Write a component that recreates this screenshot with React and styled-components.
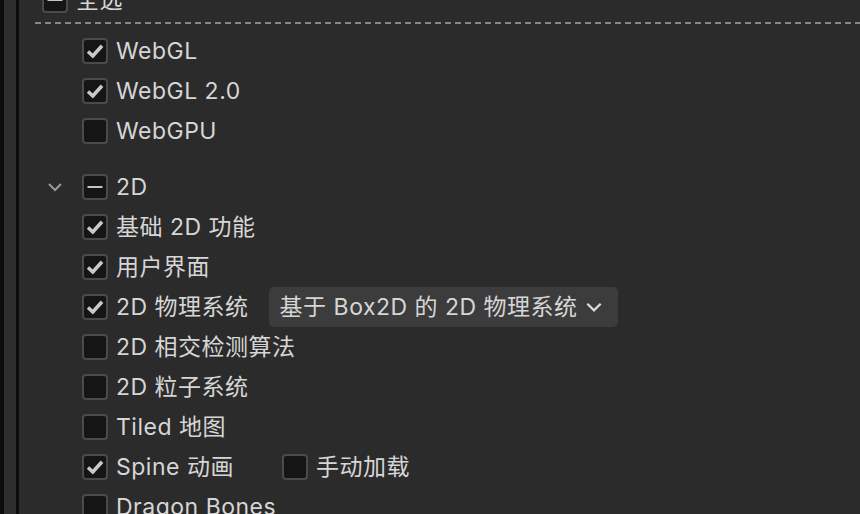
import React from 'react';
import styled, { createGlobalStyle } from 'styled-components';

const GlobalStyle = createGlobalStyle`
  html, body {
    margin: 0;
    padding: 0;
    background: #2b2b2b;
    overflow: hidden;
  }
  body {
    font-family: Inter, "Noto Sans CJK SC", sans-serif;
  }
`;

const Page = styled.div`
  display: flex;
  height: 514px;
  overflow: hidden;
`;

const Rail = styled.div`
  flex: none;
  width: 12px;
  border-left: 4px solid #0c0c0c;
  border-right: 3px solid #0c0c0c;
  background: #2d2d2d;
`;

const Main = styled.div`
  flex: 1;
  display: flex;
  flex-direction: column;
  margin-top: -20px;
`;

const Row = styled.div`
  display: flex;
  align-items: center;
  height: 40px;
  flex: none;
  padding-left: ${p => p.$indent}px;
  color: #d6d6d6;
  font-size: 23px;
  letter-spacing: 0.5px;
  white-space: nowrap;
`;

const Dashed = styled.div`
  flex: none;
  height: 2px;
  margin: 2px 0 7px 16px;
  background: repeating-linear-gradient(to right, #868686 0 6px, transparent 6px 10px);
`;

const Spacer = styled.div`
  flex: none;
  height: 16px;
`;

const Box = styled.span`
  flex: none;
  width: 22px;
  height: 22px;
  border: 2px solid #4b4b4b;
  border-radius: 4px;
  background: #151515;
  display: flex;
  align-items: center;
  justify-content: center;
  margin-right: 8px;
  margin-left: ${p => p.$gap || 0}px;
`;

const Label = styled.span`
  line-height: 1;
`;

const Toggle = styled.span`
  flex: none;
  width: 20px;
  display: flex;
  justify-content: center;
  margin-right: 17px;
`;

const Select = styled.div`
  display: flex;
  align-items: center;
  gap: 6px;
  height: 40px;
  margin-left: 20px;
  padding: 0 14px 0 11px;
  box-sizing: border-box;
  background: #3c3c3c;
  border-radius: 5px;
  color: #d6d6d6;
`;

const Check = () => (
  <svg width="20" height="20" viewBox="0 0 20 20">
    <path d="M3 10.5 L7.8 15 L17 4.8" fill="none" stroke="#c9c9c9" strokeWidth="3.6" strokeLinejoin="miter" />
  </svg>
);

const Dash = () => (
  <svg width="18" height="18" viewBox="0 0 18 18">
    <rect x="1.5" y="8" width="15" height="2" fill="#c4c4c4" />
  </svg>
);

const Chevron = ({ size = 18, color = '#9a9a9a' }) => (
  <svg width={size} height={size} viewBox="0 0 18 18">
    <path d="M3 6 L9 12 L15 6" fill="none" stroke={color} strokeWidth="2" />
  </svg>
);

const Checkbox = ({ state, gap }) => (
  <Box $gap={gap}>
    {state === 'on' && <Check />}
    {state === 'mixed' && <Dash />}
  </Box>
);

const items = [
  { label: '基础 2D 功能', state: 'on' },
  { label: '用户界面', state: 'on' },
  { label: '2D 物理系统', state: 'on', select: '基于 Box2D 的 2D 物理系统' },
  { label: '2D 相交检测算法' },
  { label: '2D 粒子系统' },
  { label: 'Tiled 地图' },
  { label: 'Spine 动画', state: 'on', extra: '手动加载' },
  { label: 'Dragon Bones' },
];

export default function App() {
  return (
    <Page>
      <GlobalStyle />
      <Rail />
      <Main>
        <Row $indent={23}>
          <Checkbox state="mixed" />
          <Label>全选</Label>
        </Row>
        <Dashed />
        <Row $indent={63}>
          <Checkbox state="on" />
          <Label>WebGL</Label>
        </Row>
        <Row $indent={63}>
          <Checkbox state="on" />
          <Label>WebGL 2.0</Label>
        </Row>
        <Row $indent={63}>
          <Checkbox />
          <Label>WebGPU</Label>
        </Row>
        <Spacer />
        <Row $indent={26}>
          <Toggle>
            <Chevron />
          </Toggle>
          <Checkbox state="mixed" />
          <Label>2D</Label>
        </Row>
        {items.map(it => (
          <Row key={it.label} $indent={63}>
            <Checkbox state={it.state} />
            <Label>{it.label}</Label>
            {it.select && (
              <Select>
                <Label>{it.select}</Label>
                <Chevron size={20} color="#dcdcdc" />
              </Select>
            )}
            {it.extra && (
              <>
                <Checkbox gap={48} />
                <Label>{it.extra}</Label>
              </>
            )}
          </Row>
        ))}
      </Main>
    </Page>
  );
}
